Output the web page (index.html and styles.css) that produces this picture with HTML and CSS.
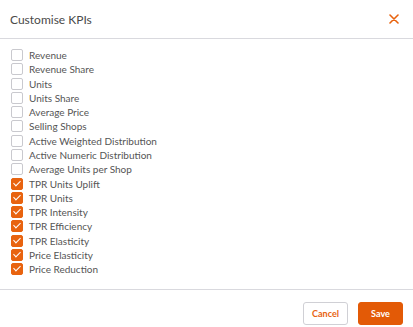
FILE: index.html
```html
<!DOCTYPE html>
<html lang="en">
  <head>
    <meta charset="UTF-8" />
    <meta name="viewport" content="width=device-width, initial-scale=1" />
    <title>Customise KPIs</title>
    <link rel="stylesheet" href="styles.css">
  </head>
  <body>
    <div class="modal">
      <div class="modal-header">
        <h2>Customise KPIs</h2>
        <span class="close">
          <svg width="10" height="10" viewBox="0 0 10 10">
            <path d="M1 1 L9 9 M9 1 L1 9" stroke="#e8630f" stroke-width="1.6" stroke-linecap="round" />
          </svg>
        </span>
      </div>

      <ul class="kpi-list">
        <li><span class="box"></span>Revenue</li>
        <li><span class="box"></span>Revenue Share</li>
        <li><span class="box"></span>Units</li>
        <li><span class="box"></span>Units Share</li>
        <li><span class="box"></span>Average Price</li>
        <li><span class="box"></span>Selling Shops</li>
        <li><span class="box"></span>Active Weighted Distribution</li>
        <li><span class="box"></span>Active Numeric Distribution</li>
        <li><span class="box"></span>Average Units per Shop</li>
        <li><span class="box checked"></span>TPR Units Uplift</li>
        <li><span class="box checked"></span>TPR Units</li>
        <li><span class="box checked"></span>TPR Intensity</li>
        <li><span class="box checked"></span>TPR Efficiency</li>
        <li><span class="box checked"></span>TPR Elasticity</li>
        <li><span class="box checked"></span>Price Elasticity</li>
        <li><span class="box checked"></span>Price Reduction</li>
      </ul>

      <div class="modal-footer">
        <button class="btn-cancel">Cancel</button>
        <button class="btn-save">Save</button>
      </div>
    </div>
  </body>
</html>
```

FILE: styles.css
```css
/* Global Styles */
body {
  font-family: Lato, "Open Sans", sans-serif;
  background-color: #fff;
  margin: 0;
}

.modal {
  width: 413px;
}

/* Header */
.modal-header {
  height: 38px;
  padding: 0 14px 0 10px;
  display: flex;
  align-items: center;
  justify-content: space-between;
  border-bottom: 1px solid #d9d9de;
}

h2 {
  margin: 0;
  font-size: 12px;
  font-weight: 400;
  color: #4a4a4a;
}

.close {
  display: flex;
  cursor: pointer;
}

/* KPI list */
.kpi-list {
  list-style: none;
  margin: 0;
  padding: 9px 0 13px 11px;
}

.kpi-list li {
  display: flex;
  align-items: center;
  height: 14.27px;
  font-size: 10px;
  color: #555;
}

.box {
  width: 10px;
  height: 10px;
  border: 1px solid #c9c9ce;
  border-radius: 2px;
  margin-right: 6px;
  background-color: #fff;
  position: relative;
}

.box.checked {
  background-color: #e8630f;
  border-color: #e8630f;
}

.box.checked::after {
  content: "";
  position: absolute;
  left: 3px;
  top: 0px;
  width: 3px;
  height: 6px;
  border: solid #fff;
  border-width: 0 1.5px 1.5px 0;
  transform: rotate(45deg);
}

/* Footer */
.modal-footer {
  border-top: 1px solid #d9d9de;
  display: flex;
  justify-content: flex-end;
  gap: 10px;
  padding: 12px 10px 0 0;
}

button {
  height: 23px;
  font-family: Lato, sans-serif;
  font-size: 9px;
  font-weight: 700;
  border-radius: 3px;
  cursor: pointer;
}

.btn-cancel {
  width: 45px;
  background-color: #fff;
  color: #e8630f;
  border: 1px solid #d0d0d5;
}

.btn-save {
  width: 45px;
  background-color: #e35a06;
  color: #fff;
  border: 1px solid #e35a06;
}
```
